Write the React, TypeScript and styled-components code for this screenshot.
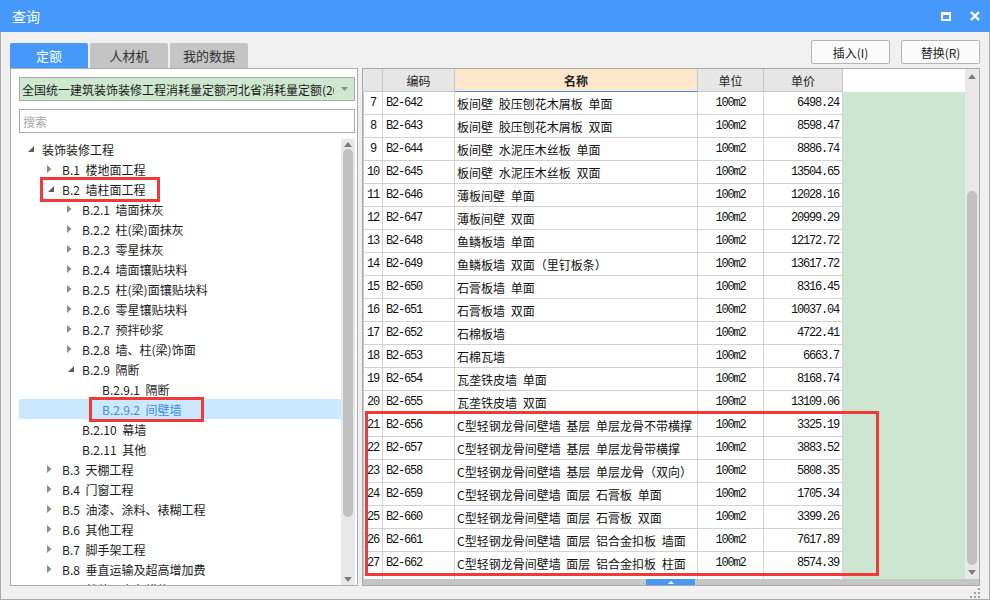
import React from 'react';
import styled, { createGlobalStyle, css } from 'styled-components';

const SANS = `"Noto Sans CJK SC", "Noto Sans", sans-serif`;
const MONO = `"Liberation Mono", "DejaVu Sans Mono", monospace`;

const GlobalStyle = createGlobalStyle`
  html, body { margin: 0; padding: 0; background: #f0f0f0; }
  body { font-family: ${SANS}; font-size: 12px; color: #1e1e1e; }
  * { box-sizing: border-box; }
`;

// ─── window chrome ──────────────────────────────────────────────
const Window = styled.div`
  width: 990px; height: 600px;
  display: flex; flex-direction: column;
  background: #f0f0f0; overflow: hidden;
`;
const TitleBar = styled.div`
  height: 32px; flex: 0 0 32px;
  display: flex; align-items: center;
  padding: 0 10px 0 12px;
  background: #4698fa; color: #fff;
  font-size: 14px;
`;
const TitleText = styled.span`flex: 1;`;
const TitleButtons = styled.div`
  display: flex; align-items: center; gap: 19px;
`;
const MaxIcon = styled.div`
  width: 10px; height: 9px;
  border: 2px solid #fff; border-top-width: 3px;
`;
const Body = styled.div`
  flex: 1; display: flex; flex-direction: column;
  padding: 0 9px;
  border: 1px solid #a9a9a9; border-top: none;
`;

// ─── toolbar with tabs + buttons ────────────────────────────────
const Toolbar = styled.div`
  height: 36px; flex: 0 0 36px;
  display: flex; align-items: flex-end;
`;
const Tabs = styled.div`display: flex; gap: 2px;`;
const Tab = styled.div<{ $active?: boolean }>`
  width: 78px; height: 25px;
  display: flex; align-items: center; justify-content: center;
  border-radius: 2px 2px 0 0;
  font-size: 13px;
  background: ${p => (p.$active ? '#4698fa' : '#c4c4c4')};
  color: ${p => (p.$active ? '#fff' : '#333')};
`;
const Actions = styled.div`
  margin-left: auto; align-self: flex-start;
  margin-top: 8px; display: flex; gap: 11px;
`;
const Button = styled.div`
  width: 79px; height: 24px;
  display: flex; align-items: center; justify-content: center;
  border: 1px solid #b4b4b4; border-radius: 2px;
  background: #fbfbfb; color: #222; font-size: 12px;
`;

// ─── main split ─────────────────────────────────────────────────
const Main = styled.div`
  height: 518px; flex: 0 0 518px;
  display: flex; gap: 4px;
`;
const LeftPanel = styled.div`
  width: 348px; flex: 0 0 348px;
  display: flex; flex-direction: column;
  background: #fff; border: 1px solid #acacac;
  padding: 8px 2px 0 8px;
`;
const Dropdown = styled.div`
  height: 24px; flex: 0 0 24px;
  display: flex; align-items: center;
  border: 1px solid #a9a9a9; background: #cee8d0;
  padding-left: 2px;
`;
const DropText = styled.div`
  flex: 1; overflow: hidden; white-space: nowrap; color: #1a1a1a;
`;
const DropArrow = styled.div`
  width: 20px; display: flex; align-items: center; justify-content: center;
`;
const Search = styled.input`
  margin-top: 8px; height: 24px; flex: 0 0 24px;
  border: 1px solid #ababab; outline: none;
  padding: 0 3px; font-family: ${SANS}; font-size: 12px;
  &::placeholder { color: #a6a6a6; }
`;
const TreeArea = styled.div`
  margin-top: 6px; flex: 1; min-height: 0;
  display: flex;
`;
const TreeList = styled.div`
  flex: 1; overflow: hidden;
`;
const TreeRow = styled.div<{ $level: number; $selected?: boolean }>`
  height: 20px; display: flex; align-items: center;
  padding-left: ${p => 8 + p.$level * 20}px;
  white-space: nowrap; word-spacing: 3px;
  background: ${p => (p.$selected ? '#cce8ff' : 'transparent')};
  color: ${p => (p.$selected ? '#3a8ee6' : '#1c1c1c')};
`;
const TreeItem = styled.span<{ $box?: [number, number] }>`
  position: relative; display: inline-flex; align-items: center; height: 20px;
  ${p =>
    p.$box &&
    css`
      &::after {
        content: ''; position: absolute;
        top: -2px; bottom: -3px;
        left: ${p.$box[0]}px; right: ${p.$box[1]}px;
        border: 3px solid #f03a3a; pointer-events: none;
      }
    `}
`;
const ArrowSlot = styled.span`
  width: 15px; flex: 0 0 15px; display: flex; align-items: center;
`;

// ─── scrollbars ─────────────────────────────────────────────────
const VScroll = styled.div`
  width: 14px; flex: 0 0 14px;
  display: flex; flex-direction: column; align-items: center;
  background: #e8e8e8;
`;
const ScrollArrow = styled.div<{ $h: number }>`
  height: ${p => p.$h}px; flex: 0 0 ${p => p.$h}px;
  display: flex; align-items: center; justify-content: center;
`;
const Thumb = styled.div<{ $top: number; $h: number }>`
  margin-top: ${p => p.$top}px;
  width: 10px; height: ${p => p.$h}px;
  border-radius: 5px; background: #c1c1c1;
`;
const Spacer = styled.div`flex: 1;`;

// ─── table ──────────────────────────────────────────────────────
const TablePanel = styled.div`
  flex: 1; display: flex; flex-direction: column;
  background: #fff; border: 1px solid #a9a9a9;
`;
const TableTop = styled.div`
  flex: 1; min-height: 0; display: flex;
`;
const Grid = styled.div`
  flex: 1; overflow: hidden; display: flex; flex-direction: column;
`;
const Row = styled.div`
  height: 23px; flex: 0 0 23px; display: flex;
`;
const Cell = styled.div<{ $w: number }>`
  flex: 0 0 ${p => p.$w}px; height: 100%;
  display: flex; align-items: center;
  border-right: 1px solid #d2d2d2; border-bottom: 1px solid #d2d2d2;
  white-space: nowrap; overflow: hidden;
`;
const HeadCell = styled(Cell)<{ $name?: boolean }>`
  justify-content: center;
  background: ${p => (p.$name ? '#fde7ca' : '#e6e6e6')};
  border-right-color: #c6c6c6;
  border-bottom: 1px solid ${p => (p.$name ? '#4a90e2' : '#c6c6c6')};
  font-weight: ${p => (p.$name ? 700 : 400)};
  color: #222;
`;
const monoText = css`
  font-family: ${MONO}; font-size: 12px; letter-spacing: -1.2px; color: #111;
`;
const NumCell = styled(Cell)`
  ${monoText};
  justify-content: center; border-left: 1px solid #c8c8c8;
`;
const CodeCell = styled(Cell)`${monoText}; padding-left: 3px;`;
const NameCell = styled(Cell)`padding-left: 2px; word-spacing: 3px; color: #111;`;
const UnitCell = styled(Cell)`${monoText}; justify-content: center;`;
const PriceCell = styled(Cell)`${monoText}; justify-content: flex-end; padding-right: 3px;`;
const Filler = styled.div<{ $head?: boolean }>`
  flex: 1; height: 100%;
  background: ${p => (p.$head ? '#fff' : '#cde6d1')};
`;
const Marked = styled.div`
  position: relative;
  &::after {
    content: ''; position: absolute;
    left: 2px; top: -3px; bottom: -1px; width: 508px;
    border: 3px solid #f03a3a; pointer-events: none;
  }
`;
const SplitBar = styled.div`
  height: 6px; flex: 0 0 6px; display: flex;
  background: #c6c6c6;
`;
const SplitThumb = styled.div`
  margin-left: 283px; width: 49px; height: 100%;
  background: #4a9af5;
  display: flex; align-items: center; justify-content: center;
`;
const Footer = styled.div`
  flex: 1; display: flex; justify-content: flex-end; align-items: flex-end;
  padding-bottom: 1px;
`;

// ─── data ───────────────────────────────────────────────────────
type TreeNode = {
  label: string;
  level: number;
  arrow?: 'open' | 'closed';
  selected?: boolean;
  box?: [number, number];
};

const tree: TreeNode[] = [
  { label: '装饰装修工程', level: 0, arrow: 'open' },
  { label: 'B.1 楼地面工程', level: 1, arrow: 'closed' },
  { label: 'B.2 墙柱面工程', level: 1, arrow: 'open', box: [-7, -14] },
  { label: 'B.2.1 墙面抹灰', level: 2, arrow: 'closed' },
  { label: 'B.2.2 柱(梁)面抹灰', level: 2, arrow: 'closed' },
  { label: 'B.2.3 零星抹灰', level: 2, arrow: 'closed' },
  { label: 'B.2.4 墙面镶贴块料', level: 2, arrow: 'closed' },
  { label: 'B.2.5 柱(梁)面镶贴块料', level: 2, arrow: 'closed' },
  { label: 'B.2.6 零星镶贴块料', level: 2, arrow: 'closed' },
  { label: 'B.2.7 预拌砂浆', level: 2, arrow: 'closed' },
  { label: 'B.2.8 墙、柱(梁)饰面', level: 2, arrow: 'closed' },
  { label: 'B.2.9 隔断', level: 2, arrow: 'open' },
  { label: 'B.2.9.1 隔断', level: 3 },
  { label: 'B.2.9.2 间壁墙', level: 3, selected: true, box: [2, -22] },
  { label: 'B.2.10 幕墙', level: 2 },
  { label: 'B.2.11 其他', level: 2 },
  { label: 'B.3 天棚工程', level: 1, arrow: 'closed' },
  { label: 'B.4 门窗工程', level: 1, arrow: 'closed' },
  { label: 'B.5 油漆、涂料、裱糊工程', level: 1, arrow: 'closed' },
  { label: 'B.6 其他工程', level: 1, arrow: 'closed' },
  { label: 'B.7 脚手架工程', level: 1, arrow: 'closed' },
  { label: 'B.8 垂直运输及超高增加费', level: 1, arrow: 'closed' },
  { label: 'B.9 其他可竞争措施项目', level: 1, arrow: 'closed' },
];

type Item = [number, string, string, string];
const items: Item[] = [
  [7, 'B2-642', '板间壁 胶压刨花木屑板 单面', '6498.24'],
  [8, 'B2-643', '板间壁 胶压刨花木屑板 双面', '8598.47'],
  [9, 'B2-644', '板间壁 水泥压木丝板 单面', '8886.74'],
  [10, 'B2-645', '板间壁 水泥压木丝板 双面', '13504.65'],
  [11, 'B2-646', '薄板间壁 单面', '12028.16'],
  [12, 'B2-647', '薄板间壁 双面', '20999.29'],
  [13, 'B2-648', '鱼鳞板墙 单面', '12172.72'],
  [14, 'B2-649', '鱼鳞板墙 双面（里钉板条）', '13617.72'],
  [15, 'B2-650', '石膏板墙 单面', '8316.45'],
  [16, 'B2-651', '石膏板墙 双面', '10037.04'],
  [17, 'B2-652', '石棉板墙', '4722.41'],
  [18, 'B2-653', '石棉瓦墙', '6663.7'],
  [19, 'B2-654', '瓦垄铁皮墙 单面', '8168.74'],
  [20, 'B2-655', '瓦垄铁皮墙 双面', '13109.06'],
  [21, 'B2-656', 'C型轻钢龙骨间壁墙 基层 单层龙骨不带横撑', '3325.19'],
  [22, 'B2-657', 'C型轻钢龙骨间壁墙 基层 单层龙骨带横撑', '3883.52'],
  [23, 'B2-658', 'C型轻钢龙骨间壁墙 基层 单层龙骨（双向）', '5808.35'],
  [24, 'B2-659', 'C型轻钢龙骨间壁墙 面层 石膏板 单面', '1705.34'],
  [25, 'B2-660', 'C型轻钢龙骨间壁墙 面层 石膏板 双面', '3399.26'],
  [26, 'B2-661', 'C型轻钢龙骨间壁墙 面层 铝合金扣板 墙面', '7617.89'],
  [27, 'B2-662', 'C型轻钢龙骨间壁墙 面层 铝合金扣板 柱面', '8574.39'],
];

const COLS = [20, 72, 243, 66, 79];

// ─── small drawings ─────────────────────────────────────────────
const Caret = ({ dir }: { dir: 'up' | 'down' }) => (
  <svg width="8" height="5" viewBox="0 0 8 5">
    <polygon points={dir === 'up' ? '0,5 4,0 8,5' : '0,0 8,0 4,5'} fill="#7c7c7c" />
  </svg>
);

const TreeArrow = ({ kind }: { kind: 'open' | 'closed' }) =>
  kind === 'open' ? (
    <svg width="6" height="6" viewBox="0 0 6 6" style={{ marginLeft: 1 }}>
      <polygon points="6,0 6,6 0,6" fill="#5c5c5c" />
    </svg>
  ) : (
    <svg width="5" height="8" viewBox="0 0 5 8">
      <polygon points="0,0 4.5,4 0,8" fill="#8c8c8c" />
    </svg>
  );

function DataRow({ row }: { row: Item }) {
  const [n, code, name, price] = row;
  return (
    <Row>
      <NumCell $w={COLS[0]}>{n}</NumCell>
      <CodeCell $w={COLS[1]}>{code}</CodeCell>
      <NameCell $w={COLS[2]}>{name}</NameCell>
      <UnitCell $w={COLS[3]}>100m2</UnitCell>
      <PriceCell $w={COLS[4]}>{price}</PriceCell>
      <Filler />
    </Row>
  );
}

export default function App() {
  const plain = items.filter(r => r[0] < 21);
  const marked = items.filter(r => r[0] >= 21);
  return (
    <>
      <GlobalStyle />
      <Window>
        <TitleBar>
          <TitleText>查询</TitleText>
          <TitleButtons>
            <MaxIcon />
            <svg width="10" height="10" viewBox="0 0 10 10">
              <path d="M1 1 L9 9 M9 1 L1 9" stroke="#fff" strokeWidth="2.4" />
            </svg>
          </TitleButtons>
        </TitleBar>
        <Body>
          <Toolbar>
            <Tabs>
              <Tab $active>定额</Tab>
              <Tab>人材机</Tab>
              <Tab>我的数据</Tab>
            </Tabs>
            <Actions>
              <Button>插入(I)</Button>
              <Button>替换(R)</Button>
            </Actions>
          </Toolbar>
          <Main>
            <LeftPanel>
              <Dropdown>
                <DropText>全国统一建筑装饰装修工程消耗量定额河北省消耗量定额(2012)</DropText>
                <DropArrow>
                  <svg width="7" height="4" viewBox="0 0 7 4">
                    <polygon points="0,0 7,0 3.5,4" fill="#8a8a8a" />
                  </svg>
                </DropArrow>
              </Dropdown>
              <Search placeholder="搜索" />
              <TreeArea>
                <TreeList>
                  {tree.map(node => (
                    <TreeRow key={node.label} $level={node.level} $selected={node.selected}>
                      <TreeItem $box={node.box}>
                        <ArrowSlot>{node.arrow && <TreeArrow kind={node.arrow} />}</ArrowSlot>
                        <span>{node.label}</span>
                      </TreeItem>
                    </TreeRow>
                  ))}
                </TreeList>
                <VScroll>
                  <ScrollArrow $h={10}><Caret dir="up" /></ScrollArrow>
                  <Thumb $top={0} $h={368} />
                  <Spacer />
                  <ScrollArrow $h={12}><Caret dir="down" /></ScrollArrow>
                </VScroll>
              </TreeArea>
            </LeftPanel>
            <TablePanel>
              <TableTop>
                <Grid>
                  <Row>
                    <HeadCell $w={COLS[0]} />
                    <HeadCell $w={COLS[1]}>编码</HeadCell>
                    <HeadCell $w={COLS[2]} $name>名称</HeadCell>
                    <HeadCell $w={COLS[3]}>单位</HeadCell>
                    <HeadCell $w={COLS[4]}>单价</HeadCell>
                    <Filler $head />
                  </Row>
                  {plain.map(r => (
                    <DataRow key={r[0]} row={r} />
                  ))}
                  <Marked>
                    {marked.map(r => (
                      <DataRow key={r[0]} row={r} />
                    ))}
                  </Marked>
                  <Row>
                    <NumCell $w={COLS[0]} />
                    <CodeCell $w={COLS[1]} />
                    <NameCell $w={COLS[2]} />
                    <UnitCell $w={COLS[3]} />
                    <PriceCell $w={COLS[4]} />
                    <Filler />
                  </Row>
                </Grid>
                <VScroll>
                  <ScrollArrow $h={14}><Caret dir="up" /></ScrollArrow>
                  <Thumb $top={108} $h={375} />
                  <Spacer />
                  <ScrollArrow $h={14}><Caret dir="down" /></ScrollArrow>
                </VScroll>
              </TableTop>
              <SplitBar>
                <SplitThumb>
                  <svg width="6" height="3" viewBox="0 0 6 3">
                    <polygon points="0,3 3,0 6,3" fill="#fff" />
                  </svg>
                </SplitThumb>
              </SplitBar>
            </TablePanel>
          </Main>
          <Footer>
            <svg width="10" height="10" viewBox="0 0 10 10">
              <g fill="#a0a0a0">
                <rect x="8" y="0" width="2" height="2" />
                <rect x="4" y="4" width="2" height="2" />
                <rect x="8" y="4" width="2" height="2" />
                <rect x="0" y="8" width="2" height="2" />
                <rect x="4" y="8" width="2" height="2" />
                <rect x="8" y="8" width="2" height="2" />
              </g>
            </svg>
          </Footer>
        </Body>
      </Window>
    </>
  );
}
